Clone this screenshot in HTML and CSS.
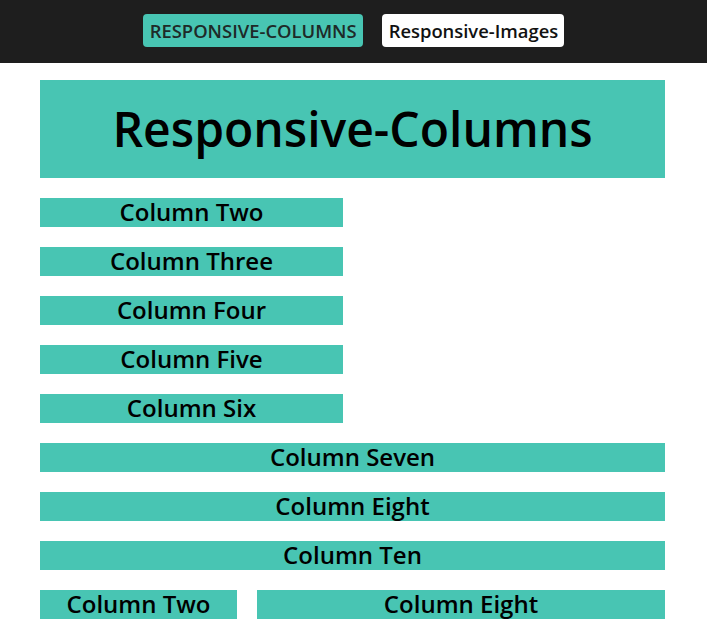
FILE: index.html
```html
<!DOCTYPE html>
<html lang="en">
<head>
  <meta charset="UTF-8">
  <meta name="viewport" content="width=device-width, initial-scale=1.0">
  <title>Responsive Columns</title>
  <link rel="stylesheet" href="styles.css">
</head>
<body>
  <nav class="topbar">
    <a class="nav-btn active" href="#">RESPONSIVE-COLUMNS</a>
    <a class="nav-btn" href="#">Responsive-Images</a>
  </nav>

  <main class="container">
    <h1 class="title">Responsive-Columns</h1>

    <div class="row"><div class="col half">Column Two</div></div>
    <div class="row"><div class="col half">Column Three</div></div>
    <div class="row"><div class="col half">Column Four</div></div>
    <div class="row"><div class="col half">Column Five</div></div>
    <div class="row"><div class="col half">Column Six</div></div>
    <div class="row"><div class="col full">Column Seven</div></div>
    <div class="row"><div class="col full">Column Eight</div></div>
    <div class="row"><div class="col full">Column Ten</div></div>
    <div class="row">
      <div class="col third">Column Two</div>
      <div class="col rest">Column Eight</div>
    </div>
  </main>
</body>
</html>
```

FILE: styles.css
```css
body {
  margin: 0;
  font-family: "Open Sans", "DejaVu Sans", sans-serif;
  background: #fff;
  color: #000;
}
.topbar {
  background: #1e1e1e;
  height: 63px;
  display: flex;
  justify-content: center;
  align-items: flex-start;
  gap: 19px;
  padding-top: 14px;
  box-sizing: border-box;
}
.nav-btn {
  display: block;
  height: 33px;
  line-height: 33px;
  padding: 0 6px 0 7px;
  border-radius: 4px;
  background: #fff;
  color: #111;
  text-decoration: none;
  font-size: 18.4px;
  font-weight: 600;
}
.nav-btn.active {
  background: #48c5b3;
  color: #1e2a28;
}
.container {
  width: 625px;
  margin: 17px 0 0 40px;
  display: flex;
  flex-direction: column;
  gap: 20px;
}
.title {
  margin: 0;
  background: #48c5b3;
  height: 98px;
  line-height: 98px;
  text-align: center;
  font-size: 48px;
  font-weight: 600;
}
.row {
  display: flex;
  gap: 20px;
}
.col {
  background: #48c5b3;
  height: 29px;
  line-height: 27px;
  text-align: center;
  font-size: 24px;
  font-weight: 600;
}
.half { width: 303px; }
.full { width: 100%; }
.third { width: 197px; }
.rest { flex: 1; }
```
